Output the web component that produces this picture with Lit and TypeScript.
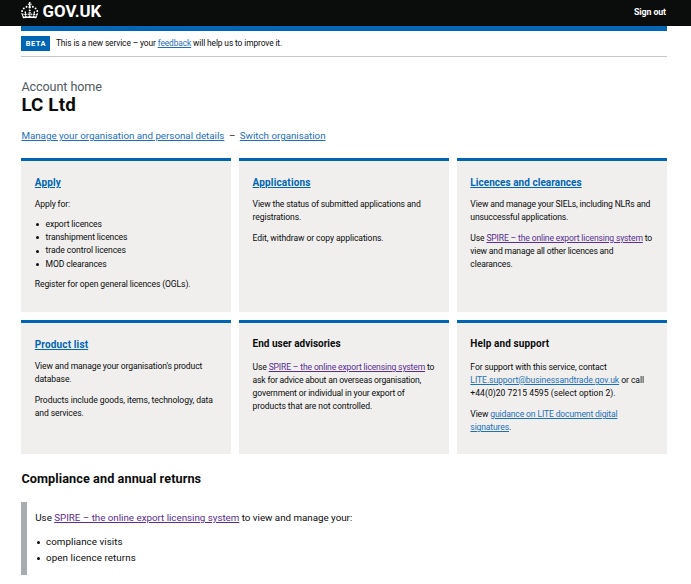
import { LitElement, html, css, TemplateResult } from "lit";
import { customElement } from "lit/decorators.js";

const line = (content: unknown, tracking = -0.12): TemplateResult =>
  html`<span class="line" style="letter-spacing:${tracking}px">${content}</span>`;
const link = (text: string, visited = false) =>
  html`<a class=${visited ? "visited" : ""} href="#">${text}</a>`;
const spire = link("SPIRE – the online export licensing system", true);

interface Tile {
  title: string;
  linked: boolean;
  tracking: number;
  body: TemplateResult;
}

const tiles: Tile[] = [
  {
    title: "Apply",
    linked: true,
    tracking: 0.15,
    body: html`<p>${line("Apply for:")}</p>
      <ul>
        <li>${line("export licences")}</li>
        <li>${line("transhipment licences")}</li>
        <li>${line("trade control licences", -0.08)}</li>
        <li>${line("MOD clearances")}</li>
      </ul>
      <p>${line("Register for open general licences (OGLs).")}</p>`,
  },
  {
    title: "Applications",
    linked: true,
    tracking: 0.16,
    body: html`<p>${line("View the status of submitted applications and", -0.15)}
        ${line("registrations.")}</p>
      <p>${line("Edit, withdraw or copy applications.", -0.1)}</p>`,
  },
  {
    title: "Licences and clearances",
    linked: true,
    tracking: 0.04,
    body: html`<p>${line("View and manage your SIELs, including NLRs and", -0.175)}
        ${line("unsuccessful applications.", -0.16)}</p>
      <p>${line(html`Use ${spire} to`, -0.16)}
        ${line("view and manage all other licences and", -0.18)}
        ${line("clearances.")}</p>`,
  },
  {
    title: "Product list",
    linked: true,
    tracking: 0.14,
    body: html`<p>${line("View and manage your organisation's product", -0.14)}
        ${line("database.")}</p>
      <p>${line("Products include goods, items, technology, data", -0.08)}
        ${line("and services.")}</p>`,
  },
  {
    title: "End user advisories",
    linked: false,
    tracking: 0,
    body: html`<p>${line(html`Use ${spire} to`, -0.16)}
        ${line("ask for advice about an overseas organisation,", -0.19)}
        ${line("government or individual in your export of", -0.15)}
        ${line("products that are not controlled.", -0.09)}</p>`,
  },
  {
    title: "Help and support",
    linked: false,
    tracking: 0.11,
    body: html`<p>${line("For support with this service, contact")}
        ${line(html`${link("LITE.support@businessandtrade.gov.uk")} or call`, -0.08)}
        ${line("+44(0)20 7215 4595 (select option 2).", 0.02)}</p>
      <p>${line(html`View ${link("guidance on LITE document digital")}`, -0.15)}
        ${line(html`${link("signatures")}.`, -0.15)}</p>`,
  },
];

@customElement("app-root")
export class AppRoot extends LitElement {
  static styles = css`
    :host { display: block; height: 584px; overflow: hidden; background: #fff; color: #0b0c0c; font-family: Roboto, sans-serif; }
    * { box-sizing: border-box; }
    p, ul, h1, h2, h3 { margin: 0; padding: 0; }
    a { color: #1d70b8; text-decoration: underline; text-decoration-thickness: 1px; text-underline-offset: 1px; }
    a.visited { color: #5a2d91; }
    .line { display: block; white-space: nowrap; }
    header { height: 25.5px; background: #0b0c0c; color: #fff; display: flex; justify-content: space-between; padding: 0 25px 0 21.4px; }
    .logo { display: flex; gap: 3.8px; padding-top: 2.3px; }
    .logo svg { width: 17.4px; height: 16.4px; fill: #fff; }
    .word { font-weight: 700; font-size: 16.8px; line-height: 19.8px; letter-spacing: 0.02px; }
    .signout { font-weight: 700; font-size: 8.8px; line-height: 25px; letter-spacing: -0.09px; }
    .wrap { width: 645.2px; margin-left: 21.4px; }
    .bar { height: 5.3px; background: #0065b3; }
    .phase { height: 26.2px; border-bottom: 1px solid #c4c7c9; display: flex; align-items: center; gap: 5.5px; font-size: 8.4px; line-height: 10px; }
    .tag { width: 29px; height: 14.5px; background: #0065b3; color: #fff; font-weight: 700; font-size: 7.5px; line-height: 15px; letter-spacing: 0.5px; text-align: center; }
    .phase > .line { margin-top: -1px; }
    .caption { margin-top: 22px; font-size: 12.6px; line-height: 15px; letter-spacing: -0.09px; color: #505a5f; }
    h1 { font-size: 18.8px; line-height: 22px; letter-spacing: 0.15px; }
    .links { margin-top: 12px; font-size: 9.8px; line-height: 15px; letter-spacing: -0.02px; display: flex; gap: 4.5px; }
    .grid { margin-top: 15px; display: grid; grid-template-columns: repeat(3, 209.6px); grid-template-rows: 154px 134.5px; gap: 7.9px 8.2px; }
    .tile { background: #f0efee; border-top: 3px solid #0065b3; padding: 13.3px 0 0 13.4px; font-size: 8.6px; line-height: 13px; }
    h3 { font-size: 10px; line-height: 17px; margin-bottom: 6.6px; }
    h3 a { color: #0065b3; }
    .plain h3 { margin: -1px 0 8.8px; }
    p + p { margin-top: 8px; }
    ul { list-style: none; margin: 6.8px 0; }
    li { line-height: 13.4px; display: flex; align-items: center; }
    li::before { content: ""; width: 3px; height: 3px; border-radius: 50%; background: #0b0c0c; margin: 0 6.4px 0 1.4px; }
    h2 { margin-top: 15.2px; font-size: 12.7px; line-height: 18px; letter-spacing: 0.08px; }
    .inset { margin-top: 14.7px; height: 73px; border-left: 6px solid #a8acaf; padding: 7.8px 0 0 7.9px; font-size: 9.8px; line-height: 16px; }
    .inset ul { margin-top: 8px; }
    .inset li { line-height: 16.2px; }
  `;

  render() {
    return html`
      <header>
        <div class="logo">
          <svg viewBox="0 0 32 30" aria-hidden="true">
            <path d="M22.6 10.4c-1 .4-2-.1-2.4-1-.4-.9.1-2 1-2.4.9-.4 2 .1 2.4 1s-.1 2-1 2.4m-5.9 6.7c-.9.4-2-.1-2.4-1-.4-.9.1-2 1-2.4.9-.4 2 .1 2.4 1s-.1 2-1 2.4m10.8-3.7c-1 .4-2-.1-2.4-1-.4-.9.1-2 1-2.4.9-.4 2 .1 2.4 1s0 2-1 2.4m3.3 4.8c-1 .4-2-.1-2.4-1-.4-.9.1-2 1-2.4.9-.4 2 .1 2.4 1s-.1 2-1 2.4M17 4.7l2.3 1.2V2.5l-2.3.7-.2-.2.9-3h-3.4l.9 3-.2.2c-.1.1-2.3-.7-2.3-.7v3.4L15 4.7c.1.1.1.2.2.2l-1.3 4c-.1.2-.1.4-.1.6 0 1.1.8 2 1.9 2.2h.7c1-.2 1.9-1.1 1.9-2.1 0-.2 0-.4-.1-.6l-1.3-4c-.1-.2 0-.2.1-.3m-7.6 5.7c.9.4 2-.1 2.4-1 .4-.9-.1-2-1-2.4-.9-.4-2 .1-2.4 1s0 2 1 2.4m-5 3c.9.4 2-.1 2.4-1 .4-.9-.1-2-1-2.4-.9-.4-2 .1-2.4 1s.1 2 1 2.4m-3.2 4.8c.9.4 2-.1 2.4-1 .4-.9-.1-2-1-2.4-.9-.4-2 .1-2.4 1s0 2 1 2.4m14.8 11c4.4 0 8.6.3 12.3.8 1.1-4.5 2.4-7 3.7-8.8l-2.5-.9c.2 1.3.3 1.9 0 2.7-.4-.4-.8-1.1-1.1-2.3l-1.2 4c.7-.5 1.3-.8 2-.9-1.1 2.5-2.6 3.1-3.5 3-1.1-.2-1.7-1.2-1.5-2.1.3-1.2 1.5-1.5 2.1-.1 1.1-2.3-.8-3-2-2.3 1.9-1.9 2.1-3.5.6-5.6-2.1 1.6-2.1 3.2-1.2 5.5-1.2-1.4-3.2-.6-2.5 1.6.9-1.4 2.1-.5 1.9.8-.2 1.1-1.7 2.1-3.5 1.9-2.7-.2-2.9-2.1-2.9-3.6.7-.1 1.9.5 2.9 1.9l.4-4.3c-1.1 1.1-2.1 1.4-3.2 1.4.4-1.2 2.1-3 2.1-3h-5.4s1.7 1.9 2.1 3c-1.1 0-2.1-.2-3.2-1.4l.4 4.3c1-1.4 2.2-2 2.9-1.9-.1 1.5-.2 3.4-2.9 3.6-1.9.2-3.4-.8-3.5-1.9-.2-1.3 1-2.2 1.9-.8.7-2.3-1.2-3-2.5-1.6.9-2.2.9-3.9-1.2-5.5-1.5 2-1.3 3.7.6 5.6-1.2-.7-3.1 0-2 2.3.6-1.4 1.8-1.1 2.1.1.2.9-.3 1.9-1.5 2.1-.9.2-2.4-.5-3.5-3 .6 0 1.2.3 2 .9l-1.2-4c-.3 1.1-.7 1.9-1.1 2.3-.3-.8-.2-1.4 0-2.7l-2.9.9C1.3 23 2.6 25.5 3.7 30c3.7-.5 7.9-.8 12.3-.8"/>
          </svg>
          <span class="word">GOV.UK</span>
        </div>
        <span class="signout">Sign out</span>
      </header>
      <div class="wrap">
        <div class="bar"></div>
        <div class="phase">
          <span class="tag">BETA</span>
          ${line(html`This is a new service – your ${link("feedback")} will help us to improve it.`, -0.11)}
        </div>
        <div class="caption">Account home</div>
        <h1>LC Ltd</h1>
        <div class="links">
          ${link("Manage your organisation and personal details")}<span>–</span>${link("Switch organisation")}
        </div>
        <div class="grid">
          ${tiles.map(
            (t) => html`<section class="tile ${t.linked ? "" : "plain"}">
              <h3>${line(t.linked ? link(t.title) : t.title, t.tracking)}</h3>
              ${t.body}
            </section>`
          )}
        </div>
        <h2>Compliance and annual returns</h2>
        <div class="inset">
          <p>${line(html`Use ${spire} to view and manage your:`, -0.02)}</p>
          <ul>
            <li>${line("compliance visits", 0.03)}</li>
            <li>${line("open licence returns", 0.08)}</li>
          </ul>
        </div>
      </div>
    `;
  }
}
